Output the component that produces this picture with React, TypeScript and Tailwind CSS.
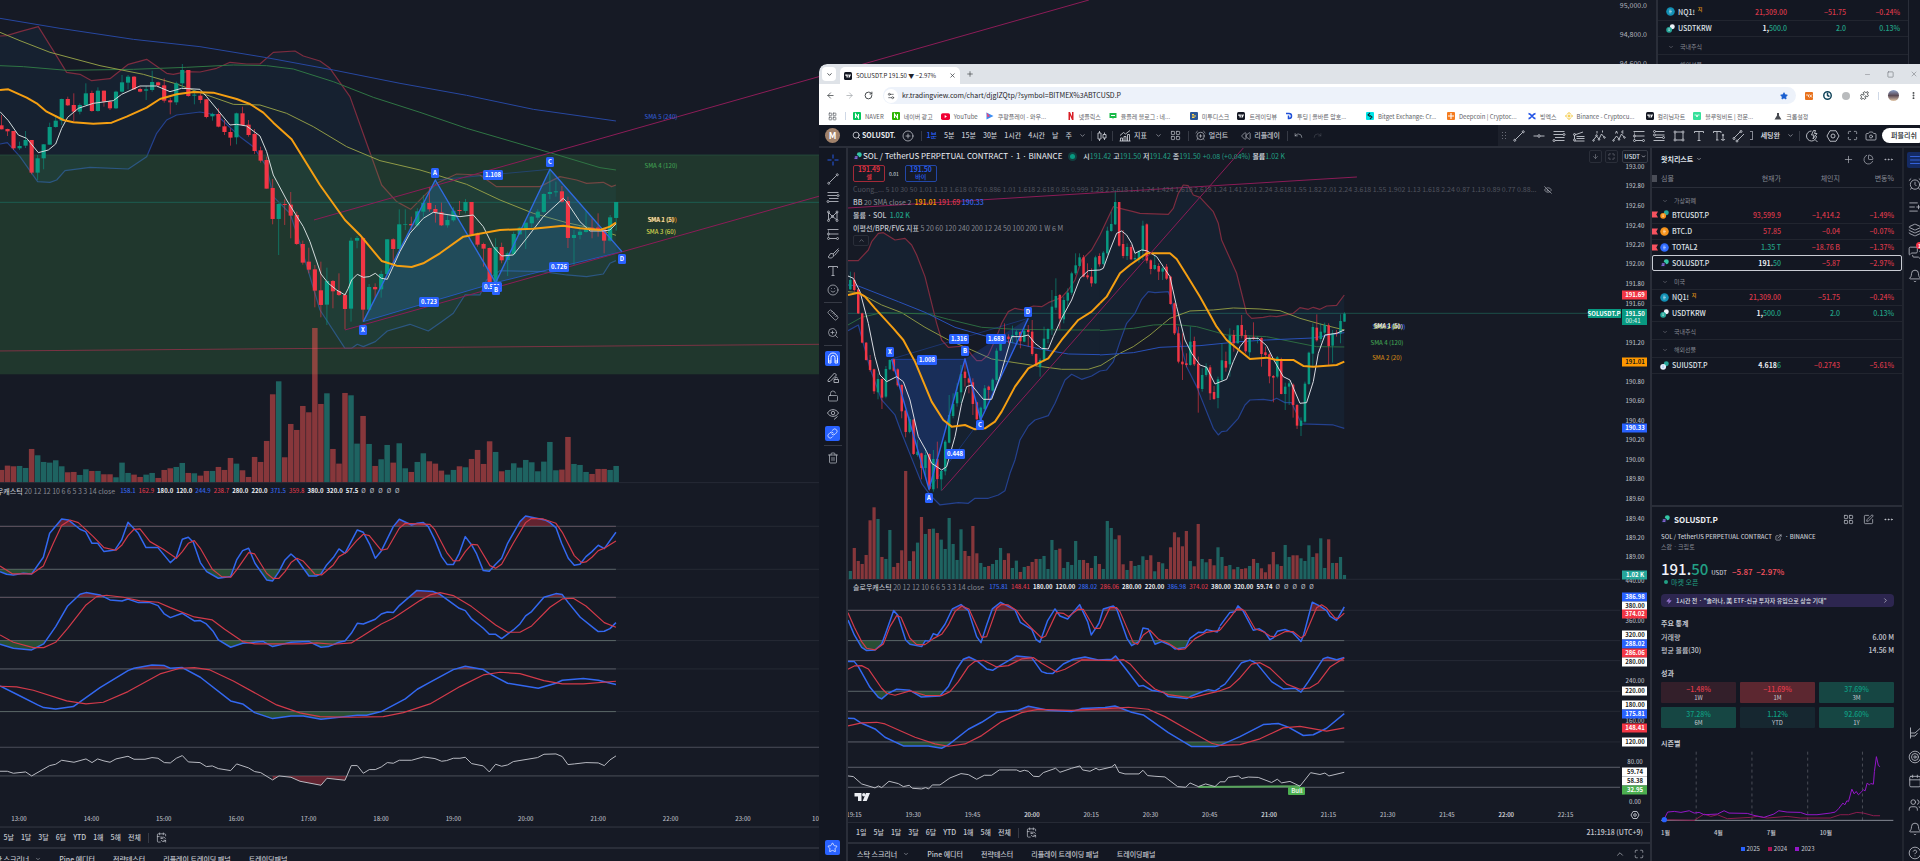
import type { ReactNode } from 'react';
import {
  AlarmClock, AlarmClockPlus, ArrowDown, ArrowLeft, ArrowRight, Bell, Calendar, CalendarSync, Camera,
  ChevronDown, ChevronRight, ChevronUp, CircleHelp, CirclePlus, Clock, Ellipsis, EllipsisVertical,
  ExternalLink, Eye, EyeOff, Layers, LayoutGrid, Link, ListPlus, LockOpen, Maximize, MessagesSquare, Minus,
  PieChart, Plus, Puzzle, Redo, Rewind, RotateCw, Ruler, Search, Settings2, Smile, Square,
  SquarePen, Star, Target, TextAlignJustify, Trash2, Type, Undo, Users, X, Zap, ZoomIn,
} from 'lucide-react';

/* ---------- chart data ---------- */

// each bar: G/R, high, body top, body bottom, low, volume top (drawing units, 3 per pixel)
const BACK_BARS = `R345,376,388,388,1410 R386,387,394,408,1397 R393,393,445,450,1399 G425,438,445,450,1398 G393,420,437,444,1404
R420,420,518,523,1347 G465,475,518,540,1366 G432,433,475,508,1386 G368,381,434,434,1388 G345,362,381,383,1381
G296,297,362,375,1399 R290,297,316,318,1417 R280,315,335,365,1416 G310,315,335,343,1425 G250,280,315,315,1408
R272,279,333,335,1413 G262,272,333,335,1413 R272,272,305,320,1423 R300,305,325,330,1423 G272,275,325,327,1432
G225,247,275,278,1388 G225,230,248,268,1419 R228,230,268,270,1424 R262,267,275,277,1431 G258,268,272,300,1424
G212,246,270,275,1419 R245,247,256,262,1434 R235,256,302,308,1410 R293,301,307,343,1405 G245,250,307,315,1401
G192,210,250,265,1389 R210,210,288,290,1419 G270,284,287,313,1420 R280,287,300,310,1427 R297,298,351,355,1413
G338,342,349,362,1413 R325,342,380,382,1401 R360,379,396,405,1410 R385,396,413,437,1374 G338,340,412,433,1391
R320,340,375,378,1411 R360,374,405,410,1431 R387,402,453,462,1371 R440,451,482,488,1386 R470,480,566,566,1323
R537,564,657,673,1183 G610,612,657,765,1144 R598,612,615,675,1372 R576,614,647,715,1272 R635,645,732,735,1290
R722,732,788,794,1218 R743,785,809,820,1237 R795,808,872,922,984 R785,871,915,952,1212 G803,843,914,975,1180
R840,843,874,925,1347 R820,873,885,888,1391 R880,885,927,988,1179 G713,722,926,965,1186 G708,714,722,745,1331
R712,714,929,965,1248 G852,861,929,930,1332 R850,861,868,895,1398 G812,822,868,893,1378 G717,718,822,825,1335
R715,718,747,800,1388 G628,673,747,747,1330 G628,672,674,690,1405 R650,672,676,690,1416 G625,634,676,680,1386
G585,609,635,650,1360 R562,609,628,635,1384 R615,627,638,668,1391 R608,637,676,678,1412 G645,660,676,683,1424
G622,632,661,665,1410 R603,630,633,645,1399 G597,606,633,640,1402 R606,606,704,706,1377 R698,701,734,740,1350
R728,732,746,800,1392 R743,744,850,850,1324 G715,741,850,855,1356 R728,741,781,790,1414 G755,760,780,828,1410
G695,702,762,765,1390 G680,683,703,705,1403 G668,668,685,747,1380 G648,650,670,683,1387 G628,635,653,660,1414
G580,582,636,640,1385 G510,576,582,598,1326 G545,574,577,590,1411 R558,574,605,608,1409 R590,603,714,744,1311
G690,705,714,795,1392 G678,695,705,718,1395 G632,685,696,698,1416 R655,683,688,715,1422 R640,683,690,710,1407
R685,688,722,760,1407 G645,652,722,725,1410 G606,606,654,692,1398`;

const FRONT_BARS_A = `G95,120,148,150,993 R97,120,150,155,924 R148,148,220,222,963 R218,220,308,310,972 R306,308,360,362,945
R345,360,390,395,841 R386,388,454,462,802 G400,417,457,478,837 R415,417,473,507,951 G378,387,470,475,957
G358,360,388,390,870 R356,358,392,395,981 R385,388,436,440,969 R433,435,514,535,931 R510,512,576,592,693
G530,537,576,580,963 R537,539,642,645,934 G600,635,645,650,908 R638,640,684,718,831 G625,645,684,710,882
R640,642,747,752,867 G630,657,748,755,866 R605,657,717,745,879 G690,693,718,752,899 G600,605,694,706,927
G465,525,608,610,834 G460,492,528,535,912 G430,456,490,500,960 G375,402,457,490,868 R355,395,414,440,933
R412,415,428,460,948 R415,427,492,525,858 R485,487,538,540,940 G500,503,540,550,969 G435,445,507,510,981
R437,440,450,480,978 G415,419,452,455,972 G325,332,420,425,960 G285,300,332,333,924 R250,290,305,310,960
R283,290,297,310,940 G257,285,290,310,984 G270,275,285,310,962 R274,276,304,325,996 G265,272,305,307,981
R255,270,276,320,978 R240,275,342,347,966 R340,342,375,380,957 G355,360,382,410,957 G260,296,360,365,948
G265,267,297,310,987 G150,200,267,285,900 G115,168,203,210,930 R162,165,236,267,926 G170,180,238,250,984
G145,158,182,200,966 G95,100,158,165,975 G40,76,100,105,903 G40,52,78,80,960 R45,52,110,112,960
R70,106,112,118,969 R85,110,130,140,984 G47,52,130,132,948 R40,48,73,80,972 G33,38,72,75,987`;

const FRONT_BARS_B = `G140,152,220,225,1023 G95,132,153,155,1044 G30,66,133,135,1078 R66,66,197,200,1066 R150,192,228,235,1153
G190,201,228,240,1170 R195,201,238,240,1143 G220,234,238,245,1158 G210,214,238,248,1155 G122,137,212,240,1129
R130,133,242,250,1140 R238,241,267,283,1126 G225,255,267,270,1174 R250,258,275,300,1146 G260,265,275,300,1150
R252,260,296,300,1167 R287,290,372,374,1102 R368,370,460,465,1057 R440,460,545,550,1072 R460,545,553,600,1099
R520,550,555,562,1053 G440,485,555,557,1143 R470,483,553,558,1159 R530,551,625,698,1032 G565,585,627,635,1137
G550,560,585,590,1147 R555,562,640,660,1137 R618,636,657,660,1156 G590,598,654,685,1102 G490,541,600,605,1131
R515,543,563,575,1158 G445,467,553,590,1155 R450,465,490,515,1168 G435,436,490,490,1161 R405,435,467,475,1167
R450,465,514,520,1165 G470,475,517,530,1158 R427,472,476,480,1137 G470,474,477,490,1149 R472,474,522,560,1165
R500,517,525,530,1177 R520,523,589,610,1153 R585,588,593,667,1116 G528,532,590,595,1153 R533,537,642,643,1158
G608,620,642,690,1095 G603,610,620,675,1131 R610,614,675,713,1126 R672,675,737,747,1126 G712,722,738,768,1135
G605,611,725,728,1143 G515,518,612,615,1096 G430,441,521,560,1131 R403,443,481,485,1120 G430,455,477,487,1075
G428,435,458,475,1164 R430,436,498,555,1078 G450,460,497,548,1149 R450,458,461,470,1149 G403,423,460,490,1131
G397,401,425,425,1185`;

const BACK_UPPER = '0,108 20,107 60,95 115,80 165,160 200,217 240,223 275,242 330,236 385,193 440,178 500,220 520,223 560,215 600,216 650,205 690,187 740,192 780,192 820,157 885,153 910,168 960,183 990,205 1050,290 1100,430 1145,555 1190,605 1232,628 1270,590 1310,550 1370,522 1440,525 1490,560 1620,560 1680,530 1730,540 1760,550 1810,547 1835,560 1848,555';
const BACK_LOWER = '0,432 22,428 60,470 113,545 150,547 170,540 195,512 270,502 385,507 440,470 470,400 500,360 530,345 600,336 650,345 720,410 760,440 800,500 820,590 870,640 900,730 960,930 1035,1045 1055,1045 1072,1033 1090,1040 1126,1025 1162,993 1230,973 1285,993 1325,965 1360,940 1395,885 1440,885 1460,840 1500,812 1630,815 1700,825 1760,830 1810,822 1830,790 1848,782';
const A_UPPER = '99,62 130,62 160,30 170,5 190,-20 205,-22 240,0 270,-5 290,15 305,45 330,110 350,190 365,250 380,300 400,322 450,318 470,345 485,362 500,362 520,345 545,290 560,250 580,215 600,205 625,210 655,198 680,200 700,188 740,172 760,150 780,120 800,60 830,30 855,-15';
const A_LOWER = '99,272 130,255 145,310 165,385 200,480 240,525 260,580 300,680 320,730 345,765 375,795 430,788 460,790 480,775 520,775 550,765 570,752 585,700 600,660 615,600 640,558 660,540 700,527 720,490 750,420 770,403 800,418 830,408 855,393';
const B_UPPER = '0,165 40,80 60,85 100,95 120,100 205,103 220,85 235,40 250,15 265,17 280,45 300,52 340,95 355,130 365,180 410,280 430,360 440,400 455,415 490,412 510,408 530,410 580,400 600,383 625,388 640,382 660,388 680,378 710,376 733,345';
const B_LOWER = '0,573 20,570 40,545 60,485 80,430 105,400 125,358 145,335 165,338 205,335 215,365 225,430 260,560 290,620 340,745 355,765 365,755 380,753 415,715 435,675 450,660 490,658 515,662 530,655 555,668 575,668 590,700 605,732 700,735 733,745';

interface OscRow {
  hi: number;
  lo: number;
  fast: string;
  slow: string;
}

const BACK_OSC: OscRow[] = [
  {
    hi: 139, lo: 268,
    fast: '0,275 20,283 40,285 70,280 95,282 130,232 149,160 185,117 205,120 240,148 257,155 276,190 293,190 312,215 345,210 365,180 384,127 415,160 438,203 474,203 511,248 529,232 547,178 565,172 580,187 601,248 620,275 655,295 692,290 710,240 728,212 746,205 765,250 800,300 818,303 837,275 855,240 873,222 890,237 927,288 950,288 963,282 980,255 1000,233 1017,207 1035,220 1072,150 1090,157 1110,195 1126,235 1144,213 1180,140 1198,118 1235,135 1252,130 1270,128 1285,140 1305,180 1325,230 1342,254 1360,254 1378,220 1396,170 1415,195 1430,222 1450,272 1468,274 1487,253 1505,235 1523,190 1560,125 1577,108 1635,120 1650,128 1668,143 1685,190 1705,235 1723,256 1740,253 1758,230 1776,215 1795,196 1813,206 1848,157',
    slow: '0,258 38,282 95,282 130,258 160,190 185,137 210,120 235,128 280,170 312,203 348,211 366,195 384,167 402,148 420,147 450,185 490,208 529,235 547,215 565,190 583,182 601,205 637,268 665,290 692,292 710,270 746,218 764,222 800,280 818,295 837,295 855,275 873,248 891,235 909,243 945,283 965,285 1000,255 1017,230 1040,217 1072,180 1090,163 1108,167 1144,211 1162,207 1198,145 1216,130 1290,133 1305,150 1340,217 1360,243 1378,242 1396,215 1415,193 1433,195 1470,257 1487,265 1505,253 1540,190 1577,128 1595,115 1630,117 1668,130 1687,157 1723,227 1745,248 1758,246 1776,232 1795,212 1813,205 1848,183',
  },
  {
    hi: 352, lo: 482,
    fast: '0,493 40,505 95,510 131,492 167,440 203,378 240,343 258,338 300,345 330,360 366,363 384,357 415,368 450,368 474,377 493,402 511,413 547,400 583,423 601,422 619,432 640,455 655,480 692,502 728,490 790,485 818,500 873,487 927,485 963,502 985,500 1017,487 1035,483 1054,460 1072,430 1090,432 1126,418 1144,402 1162,396 1180,398 1198,377 1250,332 1300,335 1320,343 1378,385 1396,392 1415,417 1450,445 1468,463 1487,463 1505,476 1540,450 1560,432 1577,408 1595,395 1632,352 1668,341 1687,344 1705,368 1741,412 1776,440 1795,455 1813,454 1830,446 1848,428',
    slow: '0,465 40,487 100,503 131,503 167,487 203,445 258,375 290,350 320,346 370,352 420,363 474,367 511,383 583,411 637,420 674,448 728,485 764,492 909,492 950,489 1000,493 1054,489 1090,467 1144,432 1180,415 1260,362 1290,345 1320,338 1360,347 1415,380 1487,435 1523,457 1560,457 1595,438 1650,382 1687,357 1720,355 1758,378 1813,428 1848,442',
  },
  {
    hi: 567, lo: 695,
    fast: '0,618 50,643 113,675 131,683 167,687 220,680 300,623 384,572 402,565 456,555 493,557 511,565 547,563 601,592 692,663 728,672 764,698 818,716 873,708 910,708 963,718 1072,706 1100,706 1144,695 1216,657 1252,628 1288,608 1360,569 1396,559 1450,569 1475,585 1523,610 1615,625 1668,610 1687,601 1750,596 1795,601 1848,614',
    slow: '0,619 50,621 100,631 200,663 258,672 310,667 384,635 480,582 540,565 583,563 630,570 700,603 830,675 900,699 960,710 1050,712 1150,710 1210,698 1290,672 1380,620 1450,585 1500,577 1560,581 1632,602 1687,612 1750,612 1848,604',
  },
];
const BACK_RSI = '0,874 22,874 40,880 77,876 95,888 149,857 167,853 185,841 222,847 258,837 276,848 293,837 312,843 330,847 348,837 384,829 402,838 435,838 456,833 474,835 493,848 511,849 529,835 547,827 565,846 600,848 619,860 637,858 655,866 692,872 710,852 746,864 764,875 782,878 818,900 837,888 873,892 900,904 963,916 981,895 1035,901 1054,857 1072,857 1090,880 1108,869 1126,869 1144,861 1162,848 1180,850 1198,841 1235,841 1270,831 1305,836 1325,844 1340,842 1360,835 1380,835 1396,832 1415,851 1450,858 1468,876 1487,853 1505,859 1523,855 1540,845 1613,833 1632,823 1668,822 1687,830 1704,854 1723,852 1758,848 1795,849 1813,857 1830,840 1848,828';

const FRONT_OSC_A: OscRow[] = [
  {
    hi: 121, lo: 212,
    fast: '99,150 118,195 140,232 155,242 180,240 200,222 212,190 236,122 248,135 272,210 285,223 320,230 331,212 343,214 355,191 367,196 390,163 412,117 438,104 460,122 485,200 498,218 515,165 532,117 557,97 600,120 616,157 650,178 663,208 675,217 698,152 720,117 735,138 758,147 794,104 818,155 829,195 852,160 865,117 895,108 905,117 936,205 950,227 972,215 984,174 1000,177 1020,223 1040,215 1065,225 1080,237 1112,233 1125,205 1150,187 1165,188 1175,179 1207,186 1215,170',
    slow: '99,128 118,172 140,215 155,235 180,240 205,222 225,170 245,137 258,142 285,205 305,224 330,224 355,206 380,193 400,165 420,125 440,108 462,117 500,202 515,200 545,115 560,103 580,105 605,122 625,150 655,180 680,204 692,198 725,128 745,130 760,140 790,118 805,118 838,175 855,175 885,113 905,113 915,125 955,218 968,223 985,195 1005,181 1030,207 1060,220 1090,239 1110,237 1140,206 1175,187 1215,181',
  },
  {
    hi: 272, lo: 364,
    fast: '99,275 118,275 130,290 165,352 190,382 200,387 220,370 245,358 285,361 318,381 375,378 400,350 425,298 445,268 462,261 485,272 515,297 533,301 550,290 605,258 650,263 680,305 695,310 713,311 745,282 775,268 810,261 850,270 890,268 902,258 935,300 972,349 985,347 1010,361 1045,367 1060,380 1115,386 1130,378 1160,366 1180,359 1200,363 1215,354',
    slow: '99,298 118,288 140,287 160,297 200,355 215,370 240,376 285,363 330,376 380,377 405,365 430,335 460,290 480,274 505,271 545,291 580,287 620,267 655,263 680,280 725,306 750,298 800,270 900,272 925,269 945,282 985,327 1020,357 1060,374 1130,384 1180,371 1215,363',
  },
  {
    hi: 424, lo: 516,
    fast: '99,445 118,446 140,460 180,477 210,502 265,528 340,528 380,535 400,525 460,478 500,457 545,428 610,421 640,409 700,421 770,425 800,416 870,413 900,408 950,427 985,435 1060,488 1130,530 1200,530 1215,526',
    slow: '99,468 140,459 185,457 210,462 300,502 360,522 400,529 450,522 500,497 560,455 620,428 670,418 770,421 860,417 940,412 1000,418 1050,440 1120,480 1190,520 1215,526',
  },
];
const FRONT_OSC_B: OscRow[] = [
  {
    hi: 881, lo: 963,
    fast: '0,922 30,885 45,883 54,867 70,882 100,934 118,930 135,940 150,960 160,955 172,937 195,932 218,940 243,965 250,950 277,857 300,868 320,880 330,895 350,907 373,870',
    slow: '0,934 30,900 50,876 65,876 75,882 105,930 130,938 150,950 165,952 195,938 220,938 243,955 255,948 290,872 305,864 320,873 345,900 355,902 373,887',
  },
  {
    hi: 1020, lo: 1103,
    fast: '0,1090 15,1082 65,1023 90,1016 110,1025 155,1075 190,1095 225,1093 243,1104 265,1075 310,1012 323,1008 350,1015 373,1009',
    slow: '0,1100 30,1090 60,1065 95,1027 120,1023 150,1038 200,1082 240,1096 270,1092 295,1078 330,1035 373,1010',
  },
  {
    hi: 1157, lo: 1241,
    fast: '0,1250 60,1226 130,1193 175,1190 205,1200 250,1223 280,1221 320,1203 373,1163',
    slow: '0,1250 60,1248 120,1232 190,1202 240,1198 320,1211 373,1202',
  },
];
const FRONT_RSI_A = '99,618 115,620 140,642 180,654 190,648 200,653 222,634 250,641 265,650 283,646 292,655 320,657 332,653 341,657 352,645 375,645 405,624 438,611 460,614 485,628 508,616 530,616 553,600 605,600 615,605 628,601 640,604 655,619 672,620 685,608 722,595 735,607 770,595 795,588 803,600 825,604 843,595 852,600 890,591 900,583 912,607 930,612 972,612 984,601 998,617 1020,619 1050,621 1088,650 1112,652 1125,639 1150,650 1172,642 1200,650 1215,636';
const FRONT_RSI_B = '0,1350 15,1350 25,1338 55,1334 65,1341 85,1337 115,1338 155,1352 172,1343 185,1353 210,1349 240,1362 272,1325 300,1330 315,1326 327,1334 373,1324';

/* ---------- chart parts ---------- */

function Line({ d, color, w = 1, opacity = 1 }: { d: string; color: string; w?: number; opacity?: number }) {
  return <polyline points={d} fill="none" stroke={color} strokeWidth={w} opacity={opacity} strokeLinejoin="round" vectorEffect="non-scaling-stroke" />;
}

function Band({ upper, lower }: { upper: string; lower: string }) {
  const back = lower.split(' ').reverse().join(' ');
  return (
    <>
      <polygon points={`${upper} ${back}`} fill="#2196f3" opacity="0.06" />
      <Line d={upper} color="#7d2c3f" w={1.2} />
      <Line d={lower} color="#24418f" w={1.2} />
    </>
  );
}

function Bars({ data, x0, step, base, body, vol }: { data: string; x0: number; step: number; base: number; body: number; vol: number }) {
  return (
    <>
      {data.split(/\s+/).map((s, i) => {
        const [high, top, bottom, low, v] = s.slice(1).split(',').map(Number);
        const up = s[0] === 'G';
        const x = x0 + step * i;
        return (
          <g key={i} fill={up ? '#089981' : '#f23645'}>
            <rect x={x - vol / 2} y={v} width={vol} height={base - v} fill={up ? '#26a69a' : '#ef5350'} opacity="0.52" />
            <rect x={x - 1.3} y={high} width={2.6} height={low - high} opacity="0.7" />
            <rect x={x - body / 2} y={top} width={body} height={bottom - top} />
          </g>
        );
      })}
    </>
  );
}

function Oscillator({ id, row, from, to, levels = true }: { id: string; row: OscRow; from: number; to: number; levels?: boolean }) {
  return (
    <g>
      <clipPath id={`${id}-hi`}><rect x={from} y={row.hi - 60} width={to - from} height={60} /></clipPath>
      <clipPath id={`${id}-lo`}><rect x={from} y={row.lo} width={to - from} height={60} /></clipPath>
      {levels && <Line d={`${from},${row.hi} ${to},${row.hi}`} color="#5d606b" />}
      {levels && <Line d={`${from},${row.lo} ${to},${row.lo}`} color="#5d606b" />}
      <polygon points={`${row.fast} ${to},${row.hi} ${from},${row.hi}`} fill="#f23645" opacity="0.35" clipPath={`url(#${id}-hi)`} />
      <polygon points={`${row.fast} ${to},${row.lo} ${from},${row.lo}`} fill="#4caf50" opacity="0.35" clipPath={`url(#${id}-lo)`} />
      <Line d={row.fast} color="#3368f0" w={1.5} />
      <Line d={row.slow} color="#d23a4a" w={1.2} />
    </g>
  );
}

function Tag({ x, y, children }: { x: number; y: number; children: string }) {
  const w = children.length > 1 ? 20 : 8;
  return (
    <g>
      <rect x={x - w / 2} y={y - 5} width={w} height={10} rx="1.5" fill="#2962ff" />
      <text x={x} y={y + 2} textAnchor="middle" fill="#fff" className="text-[6px] font-bold">{children}</text>
    </g>
  );
}

function Label({ x, y, color = '#b2b5be', children }: { x: number; y: number; color?: string; children: string }) {
  return <text x={x} y={y + 2} textAnchor="middle" fill={color} className="text-[6px] font-medium">{children}</text>;
}

function BackChart() {
  return (
    <svg className="absolute inset-0 h-full w-full" aria-label="BTCUSD.P">
      <g transform="scale(0.3333)">
        <Band upper={BACK_UPPER} lower={BACK_LOWER} />
        <rect x="0" y="465" width="6000" height="658" fill="#4caf50" opacity="0.2" />
        <Line d="0,465 6000,465" color="#2a5a45" opacity={0.6} />
        <Line d="0,607 6000,607" color="#1c5c50" />
        <Line d="0,1053 2460,1033" color="#7b3344" />
        <Line d="0,55 180,85 400,118 600,140 800,173 1000,210 1200,250 1400,286 1600,328 1848,363" color="#2747a0" />
        <Line d="0,197 70,200 200,211 400,208 560,202 700,195 800,197 880,207 1000,245 1120,292 1260,337 1400,385 1650,458 1740,485 1800,503 1848,510" color="#2f7544" />
        <Line d="0,97 60,122 150,157 300,197 430,223 530,252 600,278 700,313 780,315 860,340 940,380 1040,440 1140,482 1260,510 1300,522 1400,553 1500,600 1600,640 1700,668 1800,690 1848,706" color="#8f9a46" />
        <polygon points="1090,965 1306,540 1487,848" fill="#2479c8" opacity="0.25" />
        <polygon points="1487,848 1650,508 1866,755" fill="#2479c8" opacity="0.25" />
        <Line d="1306,540 1650,508" color="#2962ff" opacity={0.3} />
        <Line d="1090,965 1487,848" color="#2962ff" opacity={0.6} />
        <Line d="1487,848 1866,755" color="#2962ff" opacity={0.6} />
        <Line d="942,660 3267,0" color="#8c1c57" />
        <Line d="1035,990 2460,588" color="#8c1c57" />
        <Bars data={BACK_BARS} x0={4.5} step={18.08} base={1448} body={12.5} vol={16.5} />
        <Line d="1090,965 1306,540 1487,848 1650,508 1866,755" color="#2f6be0" w={1.4} />
        <Line d="0,335 25,362 55,405 80,415 115,458 145,450 167,432 185,385 203,352 235,325 280,310 340,302 365,283 420,258 470,258 510,275 545,265 600,268 620,290 690,375 710,373 740,378 780,408 800,455 820,525 860,600 910,680 930,725 963,822 985,850 1010,870 1035,885 1045,865 1055,840 1072,823 1090,832 1108,830 1126,820 1144,835 1162,838 1200,755 1230,700 1270,655 1300,637 1380,650 1420,645 1450,680 1480,740 1505,768 1540,765 1580,715 1630,650 1690,595 1700,605 1740,665 1770,693 1810,693 1830,690 1848,672" color="#d3dcdc" />
        <Line d="0,270 25,268 80,293 110,310 140,335 190,360 220,367 280,371 335,368 380,350 440,323 480,297 530,283 580,276 640,278 710,297 750,312 790,338 820,368 875,418 960,555 1035,660 1080,705 1145,783 1190,797 1235,801 1270,790 1320,760 1390,710 1430,703 1500,690 1600,686 1690,677 1740,685 1800,690 1830,680 1848,668" color="#f59f12" w={2} />
        <g transform="translate(0 1440)">
          <Line d="0,8 6000,8" color="#262a35" />
          <Line d="0,1040 6000,1040" color="#262a35" />
          {BACK_OSC.map((row, i) => (
            <g key={i}>
              <Line d={`1848,${row.hi} 2460,${row.hi}`} color="#262a35" />
              <Line d={`1848,${row.lo} 2460,${row.lo}`} color="#262a35" />
              <Oscillator id={`back-${i}`} row={row} from={0} to={1848} />
            </g>
          ))}
          <Line d="0,802 2460,802" color="#4b4e59" />
          <Line d="0,888 2460,888" color="#4b4e59" />
          <polygon points="818,888 818,900 837,888" fill="#f23645" opacity="0.4" />
          <polygon points="855,888 873,892 900,904 963,916 981,895 1035,901 1042,888" fill="#f23645" opacity="0.35" />
          <Line d={BACK_RSI} color="#b8bac2" />
        </g>
      </g>
      <Label x={661} y={117} color="#2f57c8">SMA 5 (240)</Label>
      <Label x={661} y={166} color="#3f9a50">SMA 4 (120)</Label>
      <Label x={662} y={220} color="#f59f12">SMA 2 (20)</Label>
      <Label x={661} y={220} color="#e8e6cf">SMA 1 (5)</Label>
      <Label x={661} y={232} color="#d6d64e">SMA 3 (60)</Label>
      <Tag x={492} y={287}>0.581</Tag>
      <Tag x={363} y={330}>X</Tag>
      <Tag x={435} y={173}>A</Tag>
      <Tag x={496} y={290}>B</Tag>
      <Tag x={550} y={162}>C</Tag>
      <Tag x={622} y={259}>D</Tag>
      <Tag x={429} y={302}>0.723</Tag>
      <Tag x={493} y={175}>1.108</Tag>
      <Tag x={559} y={267}>0.726</Tag>
      {['13:00', '14:00', '15:00', '16:00', '17:00', '18:00', '19:00', '20:00', '21:00', '22:00', '23:00', '10'].map((t, i) => (
        <Label key={t} x={19 + i * 72.4} y={819}>{t}</Label>
      ))}
    </svg>
  );
}

function FrontChart() {
  return (
    <svg className="absolute inset-0 h-full w-full" aria-label="SOLUSDT.P">
      <g transform="scale(0.3333)">
        <Line d="0,496 6000,496" color="#1b4f49" />
        <Line d="0,1294 6000,1294" color="#262a35" />
        <g transform="translate(-99 276)">
          <Band upper={A_UPPER} lower={A_LOWER} />
          <Line d="99,155 130,158 200,195 260,218 330,262 400,300 470,330 530,357 600,368 680,380 740,388 820,388 855,377" color="#8a9442" />
          <Line d="99,255 140,232 200,218 340,222 400,238 500,262 600,268 760,270 855,270" color="#2c6b41" />
          <Line d="99,135 130,138 250,185 330,217 420,262 500,285 600,310 680,328 760,342 855,344" color="#2850b8" />
          <polygon points="230,357 342,748 450,357" fill="#2962ff" opacity="0.2" />
          <polygon points="450,357 497,540 640,235" fill="#2962ff" opacity="0.2" />
          <Line d="230,358 450,358" color="#2962ff" opacity={0.4} />
          <Line d="230,357 640,235" color="#2962ff" opacity={0.3} />
          <Line d="342,748 497,540" color="#2962ff" opacity={0.3} />
          <Bars data={FRONT_BARS_A} x0={106} step={11.86} base={1017} body={7.5} vol={9.6} />
          <Line d="230,357 342,748 450,357 497,540 640,235" color="#2f62e8" w={1.4} />
          <Line d="99,108 115,115 135,155 160,250 180,350 195,405 215,425 245,410 265,425 285,480 310,590 335,635 350,670 380,690 395,680 420,590 440,490 455,440 470,435 490,460 505,478 530,478 555,410 590,290 620,290 640,285 660,310 680,325 700,327 715,290 740,235 770,180 795,115 820,92 855,90" color="#d9dbe2" />
          <Line d="99,165 130,158 150,170 180,205 235,265 265,300 300,365 350,485 385,540 410,560 450,555 480,568 510,565 540,545 560,515 600,440 640,385 680,365 700,355 740,300 790,240 830,215 855,190" color="#f59f12" w={2} />
        </g>
        <g transform="translate(756 96)">
          <Band upper={B_UPPER} lower={B_LOWER} />
          <Line d="0,558 60,520 100,500 150,465 210,415 270,393 340,390 400,384 480,387 540,392 600,415 660,432 733,450" color="#8a9442" />
          <Line d="0,452 100,445 160,435 220,433 290,440 380,465 500,470 600,490 650,500 733,501" color="#2c6b41" />
          <Line d="0,525 100,518 180,502 300,497 420,485 500,480 640,474 700,463 733,458" color="#2850b8" />
          <Bars data={FRONT_BARS_B} x0={22} step={11.86} base={1197} body={7.5} vol={9.6} />
          <Line d="0,270 10,265 30,210 50,160 65,153 80,165 95,190 105,220 125,210 140,212 170,230 190,260 210,290 230,380 255,480 275,520 300,555 320,562 345,612 380,598 400,545 420,500 440,475 475,475 500,497 520,537 550,590 570,600 600,670 620,668 640,605 655,520 675,465 710,460 733,450" color="#d9dbe2" />
          <Line d="0,370 20,350 60,280 90,255 140,220 210,220 230,237 260,285 300,350 350,440 380,480 450,537 500,533 530,540 580,540 610,558 640,560 680,557 710,555 733,545" color="#f59f12" w={2} />
        </g>
        <Line d="281,1028 1186,0" color="#8c1c57" />
        <Line d="0,180 1527,87" color="#8c1c57" />
        <g transform="translate(-99 1266)">
          {FRONT_OSC_A.map((row, i) => (
            <g key={i}>
              <Line d={`1588,${row.hi} 6000,${row.hi}`} color="#262a35" />
              <Line d={`1588,${row.lo} 6000,${row.lo}`} color="#262a35" />
              <Line d={`99,${row.hi} 1588,${row.hi}`} color="#5d606b" />
              <Line d={`99,${row.lo} 1588,${row.lo}`} color="#5d606b" />
              <Oscillator id={`front-a${i}`} row={row} from={99} to={1215} levels={false} />
            </g>
          ))}
          <Line d="99,592 6000,592" color="#5d606b" />
          <Line d="99,652 6000,652" color="#5d606b" />
          <Line d="1150,651 1455,649" color="#58a55c" w={2} />
          <Line d={FRONT_RSI_A} color="#b8bac2" />
        </g>
        <g transform="translate(1116 426) scale(1 1.093)">
          {FRONT_OSC_B.map((row, i) => (
            <Oscillator key={i} id={`front-b${i}`} row={row} from={0} to={373} levels={false} />
          ))}
          <Line d={FRONT_RSI_B} color="#b8bac2" />
        </g>
      </g>
      <g>
        <rect x="440" y="639" width="17" height="8" rx="1" fill="#4caf50" />
        <Label x={449} y={643} color="#fff">Bull</Label>
      </g>
      <Label x={541} y={179} color="#3467f5">SMA 5 (240)</Label>
      <Label x={540} y={179} color="#d6d64e">SMA 3 (60)</Label>
      <Label x={539} y={178} color="#f1f1e4">SMA 1 (5)</Label>
      <Label x={539} y={195} color="#3f9a50">SMA 4 (120)</Label>
      <Label x={539} y={210} color="#c78117">SMA 2 (20)</Label>
      <Tag x={42} y={204}>X</Tag>
      <Tag x={81} y={350}>A</Tag>
      <Tag x={117} y={203}>B</Tag>
      <Tag x={132} y={277}>C</Tag>
      <Tag x={180} y={164}>D</Tag>
      <Tag x={79} y={212}>1.008</Tag>
      <Tag x={111} y={191}>1.316</Tag>
      <Tag x={148} y={191}>1.683</Tag>
      <Tag x={107} y={306}>0.448</Tag>
      {['19:15', '19:30', '19:45', '20:00', '20:15', '20:30', '20:45', '21:00', '21:15', '21:30', '21:45', '22:00', '22:15'].map((t, i) => (
        <Label key={t} x={6 + i * 59.3} y={667} color={t.endsWith(':00') ? '#e0e2e8' : '#b2b5be'}>{t}</Label>
      ))}
      {/* TradingView mark */}
      <path d="M6.500 645h7v8h-3.500v-4.500H6.500zM18 645h4l-3.300 8h-4z" fill="#eceef3" />
      <circle cx="15.800" cy="646.800" r="1.700" fill="#eceef3" />
    </svg>
  );
}

const TICKS: [number, string][] = [
  [19, '193.00'], [38, '192.80'], [58, '192.60'], [78, '192.40'], [97, '192.20'], [116, '192.00'], [136, '191.80'],
  [156, '191.60'], [195, '191.20'], [234, '190.80'], [253, '190.60'], [273, '190.40'], [292, '190.20'],
  [312, '190.00'], [331, '189.80'], [351, '189.60'], [371, '189.40'], [390, '189.20'], [409, '189.00'],
  [433, '440.00'], [473, '360.00'], [533, '240.00'], [573, '160.00'], [614, '80.00'], [654, '0.00'],
];
const PRICE_TAGS: [number, string, string, string][] = [
  [147, '191.69', '#f23645', '#fff'], [214, '191.01', '#ff9800', '#1b1b1b'], [280, '190.33', '#2962ff', '#fff'],
  [427, '1.02 K', '#26a69a', '#fff'], [449, '386.98', '#2962ff', '#fff'], [458, '380.00', '#fff', '#222'],
  [466, '374.02', '#f23645', '#fff'], [487, '320.00', '#fff', '#222'], [496, '288.02', '#2962ff', '#fff'],
  [505, '286.06', '#f23645', '#fff'], [514, '280.00', '#fff', '#222'], [543, '220.00', '#fff', '#222'],
  [557, '180.00', '#fff', '#222'], [566, '175.81', '#2962ff', '#fff'], [580, '148.41', '#f23645', '#fff'],
  [594, '120.00', '#fff', '#222'], [624, '59.74', '#fff', '#222'], [633, '58.38', '#fff', '#222'],
  [642, '32.95', '#4caf50', '#fff'],
];

function PriceAxis() {
  return (
    <svg className="relative h-full w-[30px] shrink-0 overflow-visible" aria-label="price">
      {TICKS.map(([y, t]) => <Label key={t} x={15} y={y}>{t}</Label>)}
      {PRICE_TAGS.map(([y, t, bg, fg]) => (
        <g key={t}>
          <rect x="2" y={y - 4.5} width="25" height="9" fill={bg} />
          <text x="15" y={y + 2} textAnchor="middle" fill={fg} className="text-[6px] font-bold">{t}</text>
        </g>
      ))}
      <rect x="2" y="161" width="25" height="16" fill="#089981" />
      <rect x="-32" y="161" width="33" height="9" fill="#089981" />
      <text x="15" y="168" textAnchor="middle" fill="#fff" className="text-[6px] font-bold">191.50</text>
      <text x="13" y="175" textAnchor="middle" fill="#e3f5f1" className="text-[6px]">00:41</text>
      <text x="-16" y="168" textAnchor="middle" fill="#fff" className="text-[6px] font-bold">SOLUSDT.P</text>
      <g stroke="#b2b5be" fill="none"><path d="M11 667l2-3.500h4l2 3.500-2 3.500h-4z" /><circle cx="15" cy="667" r="1.300" /></g>
    </svg>
  );
}

/* ---------- shared widgets ---------- */

const OSC_VALUES_BACK: [string, string][] = [
  ['158.1', 'text-[#3565e8]'], ['162.9', 'text-[#d63849]'], ['180.0', ''], ['120.0', ''], ['244.9', 'text-[#3565e8]'],
  ['238.7', 'text-[#d63849]'], ['280.0', ''], ['220.0', ''], ['371.5', 'text-[#3565e8]'], ['359.8', 'text-[#d63849]'],
  ['380.0', ''], ['320.0', ''], ['57.5', ''],
];
const OSC_VALUES_FRONT: [string, string][] = [
  ['175.81', 'text-[#3565e8]'], ['148.41', 'text-[#d63849]'], ['180.00', ''], ['120.00', ''], ['288.02', 'text-[#3565e8]'],
  ['286.06', 'text-[#d63849]'], ['280.00', ''], ['220.00', ''], ['386.98', 'text-[#3565e8]'], ['374.02', 'text-[#d63849]'],
  ['380.00', ''], ['320.00', ''], ['59.74', ''],
];

function OscLegend({ name, values }: { name: string; values: [string, string][] }) {
  return (
    <div className="flex gap-[3px] whitespace-nowrap text-[7px] leading-[10px] text-[#868993]">
      <span><b className="font-medium text-[#c5c8d0]">{name}</b> 20 12 12 10 6 6 5 3 3 14 close</span>
      <span className="flex gap-[3px] pl-[2px] text-[6px]">
        {values.map(([v, c]) => <span key={v} className={c ? `font-medium ${c}` : 'font-bold text-[#eceef3]'}>{v}</span>)}
        {[0, 1, 2, 3, 4].map(i => <span key={i} className="pr-px text-[#c5c8d0]">Ø</span>)}
      </span>
    </div>
  );
}

const RANGES = ['1일', '5날', '1달', '3달', '6달', 'YTD', '1해', '5해', '전체'];
const PANELS = ['Pine 에디터', '전략테스터', '리플레이 트레이딩 패널', '트레이딩패널'];

function RangeBar({ children }: { children?: ReactNode }) {
  return (
    <div className="flex h-[21px] shrink-0 items-center border-b-2 border-[#2a2e39] pl-[8px] text-[7px] font-medium text-[#c5c8d0]">
      <div className="flex items-center gap-[7px]">
        {RANGES.map(r => <button key={r}>{r}</button>)}
        <span className="h-[10px] w-px bg-[#363a45]" />
        <button aria-label="날짜로 가기"><CalendarSync size={11} strokeWidth={1.500} /></button>
      </div>
      {children}
    </div>
  );
}

function PanelTabs({ children }: { children?: ReactNode }) {
  return (
    <div className="flex h-5 shrink-0 items-center gap-[18px] pl-[9px] text-[7px] font-medium text-[#c5c8d0]">
      <button className="flex items-center gap-[6px]">스탁 스크리너 <ChevronDown size={6} /></button>
      {PANELS.map(p => <button key={p}>{p}</button>)}
      {children}
    </div>
  );
}

/* ---------- watchlist ---------- */

interface Quote {
  symbol: string;
  price: string;
  tail?: string;
  change: string;
  pct: string;
  up?: boolean;
  flag?: boolean;
  active?: boolean;
  note?: string;
  main: string;
  small?: string;
}

const CRYPTO: Quote[] = [
  { symbol: 'BTCUSDT.P', price: '', tail: '93,599.9', change: '−1,414.2', pct: '−1.49%', flag: true, main: '#f7931a', small: '#26a69a' },
  { symbol: 'BTC.D', price: '', tail: '57.85', change: '−0.04', pct: '−0.07%', flag: true, main: '#f7931a' },
  { symbol: 'TOTAL2', price: '', tail: '1.35 T', change: '−18.76 B', pct: '−1.37%', flag: true, main: '#2f6bff' },
  { symbol: 'SOLUSDT.P', price: '191.', tail: '50', change: '−5.87', pct: '−2.97%', active: true, main: '#15202e', small: '#35c7a8' },
];
const US: Quote[] = [
  { symbol: 'NQ1!', price: '', tail: '21,309.00', change: '−51.75', pct: '−0.24%', note: '지', main: '#1290b5' },
  { symbol: 'USDTKRW', price: '1,', tail: '500.0', change: '2.0', pct: '0.13%', up: true, main: '#26a69a', small: '#f0f3fa' },
];
const FUTURES: Quote[] = [
  { symbol: 'SUIUSDT.P', price: '4.618', tail: '6', change: '−0.2743', pct: '−5.61%', main: '#e6eefc', small: '#26a69a' },
];

function CoinIcon({ main, small }: { main: string; small?: string }) {
  return (
    <svg viewBox="0 0 20 20" className="size-[9px]">
      {small && <circle cx="14" cy="6" r="5.500" fill={small} />}
      <circle cx={small ? 7 : 10} cy={small ? 13 : 10} r={small ? 6.500 : 9.500} fill={main} />
      <path d={small ? 'M5 11h4M5 14h4' : 'M7 7h5M7 10h6M7 13h5'} stroke={main === '#e6eefc' ? '#6fa8ef' : '#fff'} strokeWidth="1.500" opacity="0.8" />
      {main === '#15202e' && <path d="M4 11h7M3 14h7" stroke="#8a5cf6" strokeWidth="2" />}
    </svg>
  );
}

function QuoteRow({ q }: { q: Quote }) {
  const tone = q.up ? 'text-[#22a085]' : 'text-[#d63849]';
  const tail = q.price || q.symbol === 'TOTAL2' ? 'text-[#22a085]' : tone;
  return (
    <tr className={q.active ? 'rounded-[2px] font-medium outline outline-1 -outline-offset-1 outline-[#c9ccd4]' : 'border-b border-[#21252f] font-medium'}>
      <td className="relative h-4 text-[#dfe1e7]">
        <span className="flex items-center gap-[3px] pl-[8px]">
          {q.flag && <svg viewBox="0 0 7 7" className="absolute left-0 h-[7px] w-[6px]"><path d="M0 0h7L5 3.500 7 7H0z" fill="#f7525f" /></svg>}
          <CoinIcon main={q.main} small={q.small} />
          {q.symbol}
          {q.note && <sup className="text-[5px] text-[#f59f12]">{q.note}</sup>}
        </span>
      </td>
      <td className={`text-right ${tail}`}><span className="font-bold text-[#eceef3]">{q.price}</span>{q.tail}</td>
      <td className={`text-right ${tone}`}>{q.change}</td>
      <td className={`pr-2 text-right ${tone}`}>{q.pct}</td>
    </tr>
  );
}

function GroupRow({ name }: { name: string }) {
  return (
    <tr className="border-b border-[#21252f]">
      <td colSpan={4} className="h-[18px] text-[6px] text-[#868993]">
        <button className="flex items-center gap-[6px] pl-[10px] pt-1"><ChevronDown size={6} />{name}</button>
      </td>
    </tr>
  );
}

function Cols() {
  return <colgroup><col className="w-[79px]" /><col className="w-[50px]" /><col className="w-[59px]" /><col /></colgroup>;
}

function Watchlist() {
  return (
    <section>
      <header className="flex h-[22px] items-center pl-[9px] pr-2 text-[#dfe1e7]">
        <button className="flex items-center gap-[3px] text-[7px] font-bold">왓치리스트 <ChevronDown size={6} /></button>
        <div className="ml-auto flex items-center gap-[9px] text-[#b2b5be]">
          <button aria-label="심볼 추가"><Plus size={11} strokeWidth={1.500} /></button>
          <button aria-label="고급 뷰"><PieChart size={11} strokeWidth={1.500} /></button>
          <button aria-label="설정"><Ellipsis size={11} /></button>
        </div>
      </header>
      <table className="w-full table-fixed border-collapse text-[7px] leading-[10px]">
        <Cols />
        <thead>
          <tr className="border-b border-[#2a2e39] text-[#868993]">
            <th className="relative h-[17px] pl-[9px] text-left font-normal"><span className="absolute left-0 top-[5px] h-[7px] w-[5px] bg-[#4a4d57]" />심볼</th>
            <th className="text-right font-normal">현재가</th>
            <th className="text-right font-normal">체인지</th>
            <th className="pr-2 text-right font-normal">변동%</th>
          </tr>
        </thead>
        <tbody>
          <tr><td colSpan={4} className="h-5 text-[6px] text-[#868993]"><button className="flex items-center gap-[6px] pl-[10px] pt-2"><ChevronDown size={6} />가상화폐</button></td></tr>
          {CRYPTO.map(q => <QuoteRow key={q.symbol} q={q} />)}
          <GroupRow name="미국" />
          {US.map(q => <QuoteRow key={q.symbol} q={q} />)}
          <GroupRow name="국내주식" />
          <GroupRow name="해외선물" />
          {FUTURES.map(q => <QuoteRow key={q.symbol} q={q} />)}
        </tbody>
      </table>
    </section>
  );
}

const PERFORMANCE = [
  { value: '−1.48%', label: '1W', cls: 'bg-[#331f2a] text-[#e23b4b]' },
  { value: '−11.69%', label: '1M', cls: 'bg-[#5c2730] text-[#e23b4b]' },
  { value: '37.69%', label: '3M', cls: 'bg-[#164643] text-[#0f9d82]' },
  { value: '37.28%', label: '6M', cls: 'bg-[#164643] text-[#0f9d82]' },
  { value: '1.12%', label: 'YTD', cls: 'bg-[#162730] text-[#0f9d82]' },
  { value: '92.60%', label: '1Y', cls: 'bg-[#164643] text-[#0f9d82]' },
];

function Details() {
  return (
    <section className="flex flex-1 flex-col border-t-2 border-[#2a2e39] pl-[9px] pr-2 text-[7px] leading-[10px] text-[#c5c8d0]">
      <header className="flex h-[25px] items-center gap-1">
        <CoinIcon main="#15202e" small="#35c7a8" />
        <h2 className="text-[8px] font-bold text-[#eceef3]">SOLUSDT.P</h2>
        <div className="ml-auto flex gap-[9px]">
          <button aria-label="레이아웃"><LayoutGrid size={11} strokeWidth={1.500} /></button>
          <button aria-label="편집"><SquarePen size={11} strokeWidth={1.500} /></button>
          <button aria-label="더보기"><Ellipsis size={11} /></button>
        </div>
      </header>
      <p className="flex items-center gap-[3px] text-[6px] font-medium">SOL / TetherUS PERPETUAL CONTRACT <ExternalLink size={7} /> · BINANCE</p>
      <p className="text-[6px] text-[#868993]">스왑 · 크립토</p>
      <p className="mt-[9px] flex h-4 items-baseline gap-[3px] leading-4">
        <span className="text-[15px] font-medium text-[#f0f3fa]">191.<span className="text-[#22a085]">50</span></span>
        <span className="text-[6px] font-medium">USDT</span>
        <span className="pl-[2px] text-[8px] font-medium text-[#f7525f]">−5.87&nbsp; −2.97%</span>
      </p>
      <p className="flex items-center gap-[3px] pl-[3px] text-[#22a085]"><span className="size-1 rounded-full bg-[#22a085]" />마켓 오픈</p>
      <a href="#news" className="mt-[7px] flex h-[13px] items-center rounded-sm bg-[#2d2650] px-[5px] text-[6px] font-medium text-[#dfe1e7]">
        <Zap size={6} fill="#9575cd" className="mr-1 text-[#9575cd]" />1시간 전 · "솔라나, 美 ETF-신규 투자자 유입으로 상승 기대"
        <ChevronRight size={7} className="ml-auto" />
      </a>
      <h3 className="mt-[11px] font-bold">주요 통계</h3>
      <dl className="mt-1 grid grid-cols-2 gap-y-[3px] font-medium">
        <dt>거래량</dt><dd className="text-right">6.00 M</dd>
        <dt>평균 볼륨(30)</dt><dd className="text-right">14.56 M</dd>
      </dl>
      <h3 className="mt-[13px] font-bold">성과</h3>
      <div className="mt-1 grid grid-cols-3 gap-1 text-center text-[6px]">
        {PERFORMANCE.map(p => (
          <div key={p.label} className={`flex h-[21px] flex-col justify-center rounded-[1px] ${p.cls}`}>
            <span className="text-[7px] font-medium leading-[10px]">{p.value}</span>
            <span className="leading-[8px] text-[#c5c8d0]">{p.label}</span>
          </div>
        ))}
      </div>
      <h3 className="mt-[10px] font-bold">시즌별</h3>
      <svg viewBox="180 788 702 220" className="mt-[3px] w-full" aria-label="시즌별">
        <path d="M286 790V1005M454 790V1005M622 790V1005M787 790V1005" stroke="#4a4d57" strokeWidth="3" strokeDasharray="9 9" />
        <path d="M180 997H880" stroke="#868993" strokeWidth="3" />
        <polyline points="190,995 280,997 310,978 330,985 350,980 380,992 450,988 470,985 500,990 560,985 600,990 690,990 720,980 745,980 770,973 790,975 820,983 840,983" fill="none" stroke="#8c1c4f" strokeWidth="3" />
        <polyline points="190,992 200,972 220,970 240,973 265,968 280,975 295,973 310,980 350,978 370,968 385,975 440,976 460,982 490,988 520,978 535,968 560,972 600,973 620,980 650,980 690,975 705,972 715,962 728,945 734,950 740,938 745,940 755,903 762,917 768,910 775,920 790,905 795,908 801,885 808,890 812,886 820,888 823,850 829,805 835,832 840,835" fill="none" stroke="#9416c9" strokeWidth="3" />
        <circle cx="190" cy="995" r="8" fill="#2962ff" />
      </svg>
      <div className="mt-1 flex justify-between pr-[62px] text-[6px] font-medium"><span>1월</span><span>4월</span><span>7월</span><span>10월</span></div>
      <div className="mt-[6px] flex justify-center gap-2 text-[6px]">
        <span className="flex items-center gap-[2px]"><i className="size-1 bg-[#2962ff]" />2025</span>
        <span className="flex items-center gap-[2px]"><i className="size-1 bg-[#ad1457]" />2024</span>
        <span className="flex items-center gap-[2px]"><i className="size-1 bg-[#9416c9]" />2023</span>
      </div>
    </section>
  );
}

/* ---------- toolbars ---------- */

function Glyph({ children }: { children: ReactNode }) {
  return <svg viewBox="0 0 28 28" className="size-[14px]" fill="none" stroke="currentColor" strokeWidth="1.800">{children}</svg>;
}

const TrendGlyph = () => <Glyph><path d="M7 21 21 7" /><circle cx="5.500" cy="22.500" r="2" /><circle cx="22.500" cy="5.500" r="2" /></Glyph>;
const HLineGlyph = () => <Glyph><path d="M3 14h8M17 14h8" /><circle cx="14" cy="14" r="2.500" /></Glyph>;
const FibGlyph = () => <Glyph><path d="M3 5h22M3 11h19M6 17h19M6 23h19" /><circle cx="24" cy="11" r="2" /><circle cx="4" cy="23" r="2" /></Glyph>;
const PitchGlyph = () => <Glyph><path d="M5 20V12l17-6M9 15h16M9 19h16M5 24h20" /><circle cx="5" cy="22" r="2" /><circle cx="5" cy="11" r="2" /></Glyph>;
const WaveGlyph = () => <Glyph><path d="m3 22 6-8 5 6 5-10 5 6" /><circle cx="3" cy="23" r="1.500" /><circle cx="9" cy="13" r="1.500" /><circle cx="14" cy="21" r="1.500" /><circle cx="25" cy="17" r="1.500" /><path d="M10 4v5M21 3v4" /></Glyph>;
const WaveAltGlyph = () => <Glyph><path d="m3 22 6-8 5 6 5-10 5 6" /><circle cx="3" cy="23" r="1.500" /><circle cx="14" cy="21" r="1.500" /><circle cx="25" cy="17" r="1.500" /><path d="m7 9 2-5 2 5M23 4h-3v4h3" /></Glyph>;
const LongGlyph = () => <Glyph><path d="M3 5h22M7 14h18M7 23h14" /><path d="M5 7v14" strokeDasharray="2 2" /><circle cx="5" cy="14" r="2" /><circle cx="5" cy="23" r="2" /><circle cx="23" cy="23" r="2" /></Glyph>;
const ShortGlyph = () => <Glyph><path d="M7 5h18M7 12h18M3 23h22M7 17h14" /><circle cx="5" cy="5" r="2" /><circle cx="5" cy="12" r="2" /><circle cx="23" cy="17" r="2" /></Glyph>;
const RectGlyph = () => <Glyph><path d="M8 6h12M8 22h12M6 8v12M22 8v12" /><circle cx="6" cy="6" r="2" /><circle cx="22" cy="6" r="2" /><circle cx="6" cy="22" r="2" /><circle cx="22" cy="22" r="2" /></Glyph>;
const TextGlyph = () => <Glyph><path d="M5 8V5h18v3M14 5v18M11 23h6" /></Glyph>;
const AnchorTextGlyph = () => <Glyph><path d="M3 8V5h15v3M10 5v17M8 22h5M22 13v10M18 20c1 3 7 3 8 0" /><circle cx="22" cy="12" r="1.500" /></Glyph>;
const ChannelGlyph = () => <Glyph><path d="m4 18 13-13M11 23 24 10" /><circle cx="4" cy="19" r="2" /><circle cx="18" cy="5" r="2" /><circle cx="10" cy="24" r="2" /></Glyph>;
const PatternGlyph = () => <Glyph><path d="M5 22V7l8 8 9-9v16l-9-7-8 7" /><circle cx="5" cy="23" r="2" /><circle cx="5" cy="6" r="2" /><circle cx="13" cy="15" r="2" /><circle cx="22" cy="6" r="2" /><circle cx="22" cy="23" r="2" /></Glyph>;
const MagnetGlyph = () => <Glyph><path d="M5 24V13a9 9 0 0 1 18 0v11h-5V13a4 4 0 0 0-8 0v11zM5 20h5M18 20h5" /></Glyph>;
const BrushGlyph = () => <Glyph><path d="M4 22c3 3 9 3 11-2 1-3-2-6-5-5-4 1-2 5-6 7zM14 16 25 5M17 19 26 8" /></Glyph>;
const CrossGlyph = () => <Glyph><path d="M14 3v8M14 17v8M3 14h8M17 14h8" /></Glyph>;
const CandleGlyph = () => <Glyph><path d="M9 4v4M9 20v4M6 8h6v12H6zM19 7v4M19 18v4M16 11h6v7h-6z" /></Glyph>;
const IndicatorGlyph = () => <Glyph><path d="M4 13 11 7l4 3 9-7M5 24v-6h4v6M12 24v-9h4v9M19 24V11h4v13M3 24h22" /></Glyph>;
const HexGlyph = () => <Glyph><path d="m2 14 6-10.500h12L26 14l-6 10.500H8z" /><circle cx="14" cy="14" r="4" /></Glyph>;
const DrawLockGlyph = () => <Glyph><path d="m4 20 13-14 4 4L8 23H4zM16 19h9v6h-9zM18 19v-2a2 2 0 0 1 5 0" /></Glyph>;
const EyeDrawGlyph = () => <Glyph><path d="M3 12c5-9 17-9 22 0-5 9-17 9-22 0zM16 25l7-6" /><circle cx="14" cy="12" r="3.500" /></Glyph>;
const QuickGlyph = () => <Glyph><path d="M13 4a10 10 0 1 0 10 10M20 21l5 5M17 3l-4 9h5l-2 8 8-11h-5l2-6z" /></Glyph>;
const DomGlyph = () => <Glyph><path d="M5 3v22M5 14h9l10-9M5 20h9l5-6" /></Glyph>;

const INTERVALS = ['1분', '5분', '15분', '30분', '1시간', '4시간', '날', '주'];
const DRAW_TOOLS: [string, () => ReactNode][] = [
  ['추세줄', TrendGlyph], ['가로줄', HLineGlyph], ['피보나치', FibGlyph], ['피치포크', PitchGlyph], ['엘리엇 임펄스', WaveGlyph],
  ['엘리엇 코렉션', WaveAltGlyph], ['롱 포지션', LongGlyph], ['쇼트 포지션', ShortGlyph], ['네모', RectGlyph], ['텍스트', TextGlyph],
  ['앵커드 텍스트', AnchorTextGlyph], ['패러렐 채널', ChannelGlyph],
];
const Divider = () => <span className="h-[10px] w-px bg-[#363a45]" />;

function TopToolbar() {
  return (
    <div className="flex h-[23px] shrink-0 items-center border-b-2 border-[#2a2e39] bg-[#131722] pl-[6px] text-[7px] font-medium text-[#c5c8d0]">
      <button className="mr-[12px] size-[15px] rounded-full bg-[#a1826b] text-[9px] font-bold leading-[15px] text-white">M</button>
      <button className="flex items-center gap-px font-bold text-[#eceef3]"><Search size={9} />SOLUSDT.</button>
      <button aria-label="심볼 비교" className="ml-[6px] mr-[7px]"><CirclePlus size={12} strokeWidth={1.500} /></button>
      <Divider />
      <div className="flex gap-[7px] px-[5px]">
        {INTERVALS.map((t, i) => <button key={t} className={i === 0 ? 'text-[#2962ff]' : ''}>{t}</button>)}
        <button aria-label="인터벌 더보기"><ChevronDown size={7} /></button>
      </div>
      <Divider />
      <button aria-label="캔들" className="mx-[3px]"><CandleGlyph /></button>
      <Divider />
      <button className="ml-[5px] flex items-center gap-[2px]"><IndicatorGlyph />지표</button>
      <button aria-label="즐겨찾기" className="mx-[8px]"><ChevronDown size={7} /></button>
      <button aria-label="지표 템플릿" className="mr-[7px]"><LayoutGrid size={11} strokeWidth={1.500} /></button>
      <Divider />
      <button className="mx-[6px] flex items-center gap-[3px]"><AlarmClockPlus size={11} strokeWidth={1.500} />얼러트</button>
      <button className="mx-[7px] flex items-center gap-[3px]"><Rewind size={10} strokeWidth={1.500} />리플레이</button>
      <Divider />
      <button aria-label="되돌리기" className="mx-[6px]"><Undo size={9} strokeWidth={1.500} /></button>
      <button aria-label="다시하기" className="mx-1 text-[#4a4d57]"><Redo size={9} strokeWidth={1.500} /></button>
      <div className="ml-auto flex h-full items-center gap-[6px] bg-[#1c202b] pl-[4px] pr-1">
        <span className="grid grid-cols-2 gap-[2px]">{[0, 1, 2, 3, 4, 5].map(i => <i key={i} className="size-px bg-[#6a6d78]" />)}</span>
        {DRAW_TOOLS.map(([label, Icon]) => <button key={label} aria-label={label}><Icon /></button>)}
      </div>
      <span className="h-[9px] w-[3px] border-y border-r border-[#868993]" />
      <button className="ml-[8px] mr-[7px] whitespace-nowrap text-[#eceef3]">세팅완</button>
      <button aria-label="레이아웃 관리" className="mr-[5px]"><ChevronDown size={7} /></button>
      <Divider />
      <div className="flex items-center gap-[7px] px-[5px]">
        <button aria-label="빠른 찾기"><QuickGlyph /></button>
        <button aria-label="설정"><HexGlyph /></button>
        <button aria-label="풀스크린"><Maximize size={11} strokeWidth={1.500} /></button>
        <button aria-label="스냅샷"><Camera size={12} strokeWidth={1.500} /></button>
      </div>
      <button className="h-[15px] w-[44px] shrink-0 rounded-full bg-white text-[7px] text-[#131722]">퍼블리쉬</button>
    </div>
  );
}

function ToolButton({ label, on, children }: { label: string; on?: boolean; children: ReactNode }) {
  return (
    <button aria-label={label} className="flex h-[18px] w-full items-center justify-center">
      <span className={`flex size-[15px] items-center justify-center rounded-[2px] ${on ? 'bg-[#2962ff] text-white' : ''}`}>{children}</span>
    </button>
  );
}

function LeftRail() {
  return (
    <nav className="flex w-[29px] shrink-0 flex-col items-center border-r-2 border-[#2a2e39] pt-[3px] text-[#b2b5be]">
      <div className="flex h-[148px] w-full flex-col justify-between">
        <ToolButton label="커서"><span className="text-[#2962ff]"><CrossGlyph /></span></ToolButton>
        <ToolButton label="추세줄"><TrendGlyph /></ToolButton>
        <ToolButton label="피보나치"><FibGlyph /></ToolButton>
        <ToolButton label="패턴"><PatternGlyph /></ToolButton>
        <ToolButton label="예측"><LongGlyph /></ToolButton>
        <ToolButton label="브러쉬"><BrushGlyph /></ToolButton>
        <ToolButton label="글"><TextGlyph /></ToolButton>
        <ToolButton label="아이콘"><Smile size={12} strokeWidth={1.500} /></ToolButton>
      </div>
      <span className="my-[3px] h-px w-[18px] bg-[#363a45]" />
      <ToolButton label="자"><Ruler size={12} strokeWidth={1.500} /></ToolButton>
      <ToolButton label="줌"><ZoomIn size={12} strokeWidth={1.500} /></ToolButton>
      <span className="my-[3px] h-px w-[18px] bg-[#363a45]" />
      <div className="flex h-[93px] w-full flex-col justify-between">
        <ToolButton label="마그넷" on><MagnetGlyph /></ToolButton>
        <ToolButton label="그리기 유지"><DrawLockGlyph /></ToolButton>
        <ToolButton label="잠금"><LockOpen size={12} strokeWidth={1.500} /></ToolButton>
        <ToolButton label="감추기"><EyeDrawGlyph /></ToolButton>
        <ToolButton label="싱크" on><Link size={11} strokeWidth={1.500} /></ToolButton>
      </div>
      <span className="my-[3px] h-px w-[18px] bg-[#363a45]" />
      <ToolButton label="지우기"><Trash2 size={12} strokeWidth={1.500} /></ToolButton>
      <div className="mb-[8px] mt-auto w-full"><ToolButton label="즐겨찾기" on><Star size={11} strokeWidth={1.500} /></ToolButton></div>
    </nav>
  );
}

function RightRail() {
  return (
    <nav className="flex w-6 shrink-0 flex-col items-center justify-between border-l-2 border-[#21252f] text-[#b2b5be]">
      <div className="flex flex-col items-center gap-[9px] pt-1">
        <button aria-label="왓치리스트" className="rounded-[2px] bg-[#142a63] p-[2px] text-[#3f74ff]"><TextAlignJustify size={12} strokeWidth={1.500} /></button>
        <button aria-label="얼러트"><AlarmClock size={14} strokeWidth={1.500} /></button>
        <button aria-label="뉴스"><ListPlus size={14} strokeWidth={1.500} /></button>
        <button aria-label="데이터 윈도우"><Layers size={14} strokeWidth={1.500} /></button>
        <button aria-label="챗" className="relative">
          <MessagesSquare size={14} strokeWidth={1.500} />
          <span className="absolute -right-px -top-1 size-[7px] rounded-full bg-[#f23645] text-[5px] font-bold leading-[7px] text-white">1</span>
        </button>
        <button aria-label="알림"><Bell size={14} strokeWidth={1.500} /></button>
      </div>
      <div className="flex flex-col items-center gap-[10px] pb-[4px]">
        <button aria-label="호가창"><DomGlyph /></button>
        <button aria-label="스크리너"><Target size={14} strokeWidth={1.500} /></button>
        <button aria-label="캘린더"><Calendar size={14} strokeWidth={1.500} /></button>
        <button aria-label="커뮤니티"><Users size={14} strokeWidth={1.500} /></button>
        <button aria-label="공지"><Bell size={14} strokeWidth={1.500} /></button>
        <button aria-label="도움"><CircleHelp size={14} strokeWidth={1.500} /></button>
      </div>
    </nav>
  );
}

function ChartLegend() {
  const ohlc = [['시', '191.42'], ['고', '191.50'], ['저', '191.42'], ['종', '191.50']];
  return (
    <div className="absolute left-[5px] right-8 top-0 whitespace-nowrap text-[7px] text-[#868993]">
      <div className="flex h-4 items-center">
        <CoinIcon main="#15202e" small="#35c7a8" />
        <h1 className="ml-px text-[8px] text-[#eceef3]">SOL / TetherUS PERPETUAL CONTRACT · 1 · BINANCE</h1>
        <span className="mx-[8px] size-[5px] rounded-full bg-[#089981] ring-2 ring-[#089981]/30" />
        <p className="flex gap-[2px] text-[#22a085]">
          {ohlc.map(([k, v]) => <span key={k}><b className="font-medium text-[#dfe1e7]">{k}</b>{v}</span>)}
          <span>+0.08 (+0.04%)</span>
          <span><b className="font-medium text-[#dfe1e7]">볼륨</b>1.02 K</span>
        </p>
        <div className="ml-auto flex gap-[3px]">
          <button aria-label="아래로" className="rounded-[2px] border border-[#2a2e39] p-[2px]"><ArrowDown size={7} /></button>
          <button aria-label="맥시마이즈" className="rounded-[2px] border border-[#2a2e39] p-[2px]"><Maximize size={7} /></button>
        </div>
      </div>
      <div className="flex h-[18px] items-center gap-[4px] text-center text-[7px] leading-[7px]">
        <button className="h-[17px] w-8 rounded-[2px] border border-[#a32a38] font-medium text-[#f23645]">191.49<br /><span className="text-[6px]">셀</span></button>
        <span className="text-[5px] text-[#dfe1e7]">0.01</span>
        <button className="ml-[2px] h-[17px] w-8 rounded-[2px] border border-[#2247a8] font-medium text-[#2962ff]">191.50<br /><span className="text-[6px]">바이</span></button>
      </div>
      <div className="flex flex-col pt-px leading-[13px]">
        <p className="flex items-center gap-[8px] text-[#50535e]">
          Cuong_... 5 10 30 50 1.01 1.13 1.618 0.76 0.886 1.01 1.618 2.618 0.85 0.999 1.28 2 3.618 1.1 1.24 1.424 1.618 2.618 1.24 1.41 2.01 2.24 3.618 1.55 1.82 2.01 2.24 3.618 1.55 1.902 1.13 1.618 2.24 0.87 1.13 0.89 0.77 0.88...
          <EyeOff size={8} className="text-[#b2b5be]" />
        </p>
        <p><b className="font-medium text-[#c5c8d0]">BB</b> 20 SMA close 2 &nbsp;<span className="font-medium text-[#ff9800]">191.01</span> <span className="font-medium text-[#d63849]">191.69</span> <span className="font-medium text-[#3565e8]">190.33</span></p>
        <p><b className="font-medium text-[#c5c8d0]">볼륨 · SOL</b> &nbsp;<span className="font-medium text-[#22a085]">1.02 K</span></p>
        <p><b className="font-medium text-[#c5c8d0]">이평선/BPR/FVG 지표</b> 5 20 60 120 240 200 12 24 50 100 200 1 W 6 M</p>
      </div>
      <button aria-label="지표 범례 감추기" className="flex h-[11px] w-4 items-center justify-center rounded-[2px] border border-[#2a2e39]"><ChevronUp size={7} /></button>
    </div>
  );
}

/* ---------- browser chrome ---------- */

function TvMark() {
  return (
    <svg viewBox="0 0 16 16" className="size-[8px] shrink-0">
      <rect width="16" height="16" rx="3" fill="#131722" />
      <path d="M2.500 5h5v6H5V7.500H2.500zM11 5h3l-2.500 6h-3z" fill="#fff" />
      <circle cx="9.300" cy="6.200" r="1.200" fill="#fff" />
    </svg>
  );
}

function SiteIcon({ bg, children }: { bg: string; children?: ReactNode }) {
  return (
    <svg viewBox="0 0 16 16" className="size-[8px] shrink-0" fill="none" stroke="#fff" strokeWidth="2.200">
      <rect width="16" height="16" rx="2" fill={bg} stroke="none" />
      {children}
    </svg>
  );
}

const BOOKMARKS: { name: string; icon: ReactNode; cut?: boolean }[] = [
  { name: 'NAVER', icon: <SiteIcon bg="#03c75a"><path d="M5 12V4l6 8V4" /></SiteIcon> },
  { name: '네이버 광고', icon: <SiteIcon bg="#2db400"><path d="M5 12V4l6 8V4" /></SiteIcon> },
  { name: 'YouTube', icon: <svg viewBox="0 0 16 16" className="size-[9px]"><rect y="2" width="16" height="12" rx="3" fill="#f00033" /><path d="m6.500 5.500 4 2.500-4 2.500z" fill="#fff" /></svg> },
  { name: '쿠팡플레이 - 와우...', cut: true, icon: <svg viewBox="0 0 16 16" className="size-[8px]"><path d="M1 1l14 7-14 7z" fill="#3b8ef3" /><path d="M1 1l7 7-5 3z" fill="#e8467c" /></svg> },
  { name: '넷플릭스', icon: <svg viewBox="0 0 16 16" className="size-[8px]"><path d="M3 0h3l4 9V0h3v16h-3L6 7v9H3z" fill="#d81f26" /></svg> },
  { name: '율플레 블로그 : 네...', cut: true, icon: <svg viewBox="0 0 16 16" className="size-[8px]"><path d="M1 2h14v10H9l-1 3-1-3H1z" fill="#19ba48" /><path d="M4 7h8" stroke="#fff" strokeWidth="2" /></svg> },
  { name: '미투디스크', icon: <SiteIcon bg="#2b5797"><path d="M4 5h4M4 8h8M4 11h5" stroke="#ffd54f" /></SiteIcon> },
  { name: '트레이딩뷰', icon: <TvMark /> },
  { name: '투딩 | 올바른 암호...', cut: true, icon: <svg viewBox="0 0 16 16" className="size-[8px]" fill="none" stroke="#1f4fd8" strokeWidth="3"><path d="M2 3h6a5 5 0 0 1 0 10H7V7" /></svg> },
  { name: 'Bitget Exchange: Cr...', cut: true, icon: <SiteIcon bg="#00e5e8"><path d="m8 2-4 4 4 3M8 14l4-4-4-3" stroke="#0b2b33" /></SiteIcon> },
  { name: 'Deepcoin | Cryptoc...', cut: true, icon: <SiteIcon bg="#f57c1f"><path d="M8 2v12M2 8h12" /></SiteIcon> },
  { name: '빙엑스', icon: <svg viewBox="0 0 16 16" className="size-[8px]" fill="none" stroke="#2354e6" strokeWidth="3.500"><path d="M1 3c6 0 8 10 14 10M1 13c6 0 8-10 14-10" /></svg> },
  { name: 'Binance - Cryptocu...', cut: true, icon: <svg viewBox="0 0 16 16" className="size-[8px]" fill="none" stroke="#f0b90b" strokeWidth="1.800"><path d="m8 1 3 3M8 1 5 4M8 15l3-3M8 15l-3-3M1 8l3-3M1 8l3 3M15 8l-3-3M15 8l-3 3M8 5.500 10.500 8 8 10.500 5.500 8z" /></svg> },
  { name: '컬리님자트', icon: <TvMark /> },
  { name: '블루밍비트 | 전문...', cut: true, icon: <SiteIcon bg="#35e09a"><path d="M3 6h4v4M9 10V6h4" strokeWidth="1.500" /></SiteIcon> },
  { name: '크롬설정', icon: <svg viewBox="0 0 16 16" className="size-[8px]"><path d="M6 2h4v5l5 8H1l5-8z" fill="#474a50" /></svg> },
];

function BrowserHeader() {
  return (
    <header className="shrink-0 text-[#3c4043]">
      <div className="flex h-[20px] items-center rounded-tl-lg bg-[#dfe3e8] pl-[3px]">
        <button aria-label="탭 검색" className="flex size-[14px] items-center justify-center rounded-[4px] bg-white"><ChevronDown size={7} strokeWidth={3} /></button>
        <div className="ml-[4px] mt-[3px] flex h-[17px] w-[120px] items-center gap-1 rounded-t-[5px] bg-white px-1 text-[6px]">
          <TvMark />
          <span className="whitespace-nowrap text-[#1f2328]">SOLUSDT.P 191.50 ▼ −2.97%</span>
          <button aria-label="탭 닫기" className="ml-auto"><X size={7} strokeWidth={2.500} /></button>
        </div>
        <button aria-label="새 탭" className="ml-[6px]"><Plus size={8} /></button>
        <div className="ml-auto mr-[8px] flex items-center gap-[16px] text-[#6b6f75]">
          <button aria-label="최소화"><Minus size={7} strokeWidth={1.500} /></button>
          <button aria-label="최대화"><Square size={7} strokeWidth={2} /></button>
          <button aria-label="닫기"><X size={8} strokeWidth={1.500} /></button>
        </div>
      </div>
      <div className="flex h-[23px] items-center bg-white pl-[7px]">
        <button aria-label="뒤로"><ArrowLeft size={9} /></button>
        <button aria-label="앞으로" className="ml-[10px] text-[#a5a9ae]"><ArrowRight size={9} /></button>
        <button aria-label="새로고침" className="mx-[10px]"><RotateCw size={9} strokeWidth={2.500} /></button>
        <label className="flex h-[17px] flex-1 items-center gap-[4px] rounded-full bg-[#edf2fa] pl-px pr-2">
          <span className="flex size-[14px] items-center justify-center rounded-full bg-white"><Settings2 size={8} /></span>
          <input aria-label="주소" defaultValue="kr.tradingview.com/chart/djgIZQtp/?symbol=BITMEX%3ABTCUSD.P" className="min-w-0 flex-1 bg-transparent text-[7px] text-[#1f2328] outline-none" />
          <Star size={8} fill="#1a5fd0" className="text-[#1a5fd0]" />
        </label>
        <div className="ml-[9px] mr-[8px] flex items-center gap-[10px]">
          <SiteIcon bg="#e8711c"><path d="M2 6h5v4M9 5l5 6M14 5l-5 6" strokeWidth="1.500" /></SiteIcon>
          <Clock size={9} strokeWidth={4} className="text-[#17495f]" />
          <span className="size-[8px] rounded-full bg-[#b9bbbd]" />
          <button aria-label="확장 프로그램"><Puzzle size={9} strokeWidth={2.500} /></button>
          <span className="-mx-px h-[8px] w-px bg-[#cfd8e6]" />
          <span className="size-[11px] rounded-full bg-linear-to-b from-[#8aa0c8] via-[#5b4a55] to-[#e2c7a8]" />
          <button aria-label="메뉴"><EllipsisVertical size={9} strokeWidth={3} /></button>
        </div>
      </div>
      <nav className="flex h-[18px] items-center gap-[8px] overflow-hidden bg-white pl-[9px] text-[6px] text-[#5f6368]">
        <button aria-label="앱"><LayoutGrid size={9} /></button>
        <span className="-mr-[1px] h-[8px] w-px bg-[#cfd8e6]" />
        {BOOKMARKS.map(b => (
          <a key={b.name} href="#bookmark" className="flex shrink-0 items-center gap-[4px] whitespace-nowrap">
            {b.icon}
            <span className={b.cut ? 'w-[61px]' : ''}>{b.name}</span>
          </a>
        ))}
      </nav>
    </header>
  );
}

/* ---------- windows ---------- */

function BackWindow() {
  return (
    <div className="absolute inset-x-0 -bottom-2 top-0 flex bg-[#161a25]">
      <div className="flex min-w-0 flex-1 flex-col">
        <div className="flex min-h-0 flex-1">
          <div className="relative min-w-0 flex-1 overflow-hidden">
            <BackChart />
            <div className="absolute -left-[16px] top-[486px]"><OscLegend name="슬로우캐스틱" values={OSC_VALUES_BACK} /></div>
          </div>
          <div className="flex w-[60px] shrink-0 flex-col items-end gap-[19px] border-r-2 border-[#2a2e39] pr-[9px] text-[7px] leading-[10px] text-[#b2b5be]">
            <span>95,000.0</span><span>94,800.0</span><span>94,600.0</span>
          </div>
        </div>
        <div className="-ml-[22px] border-t border-[#262a35]"><RangeBar /></div>
        <div className="-ml-[20px]"><PanelTabs /></div>
      </div>
      <aside className="w-[251px] shrink-0 border-r border-[#2a2e39] bg-[#131722] pt-1">
        <table className="w-full table-fixed border-collapse text-[7px] leading-[10px]">
          <Cols />
          <tbody>
            {US.map(q => <QuoteRow key={q.symbol} q={q} />)}
            <GroupRow name="국내주식" />
            <GroupRow name="해외선물" />
          </tbody>
        </table>
      </aside>
      <div className="w-[11px] shrink-0 bg-[#131722]" />
    </div>
  );
}

function FrontWindow() {
  return (
    <div className="absolute -bottom-[3px] -right-[6px] left-[819px] top-16 flex flex-col overflow-hidden rounded-tl-lg bg-[#131722]">
      <BrowserHeader />
      <TopToolbar />
      <div className="flex min-h-0 flex-1">
        <LeftRail />
        <main className="flex min-w-0 flex-1 flex-col">
          <div className="relative flex min-h-0 flex-1 bg-[#161a25]">
            <div className="relative min-w-0 flex-1 overflow-hidden">
              <FrontChart />
              <div className="absolute left-[5px] top-[434px]"><OscLegend name="슬로우캐스틱" values={OSC_VALUES_FRONT} /></div>
            </div>
            <PriceAxis />
            <ChartLegend />
            <button className="absolute right-[2px] top-[2px] flex h-[13px] items-center gap-px rounded-[2px] border border-[#363a45] bg-[#161a25] px-px text-[6px] font-medium text-[#dfe1e7]">USDT<ChevronDown size={5} strokeWidth={3} /></button>
          </div>
          <div className="border-t border-[#262a35]">
            <RangeBar><span className="ml-auto pr-[7px]">21:19:18 (UTC+9)</span></RangeBar>
          </div>
          <PanelTabs>
            <span className="ml-auto flex gap-[9px] pr-[6px]"><ChevronUp size={10} strokeWidth={1.500} /><Maximize size={10} strokeWidth={1.500} /></span>
          </PanelTabs>
        </main>
        <aside className="flex w-[252px] shrink-0 flex-col border-l-2 border-[#2a2e39]">
          <div className="h-[357px] shrink-0"><Watchlist /></div>
          <Details />
        </aside>
        <RightRail />
      </div>
    </div>
  );
}

export default function App() {
  return (
    <div className="relative h-screen min-h-[861px] overflow-hidden bg-[#131722] font-['Noto_Sans_CJK_KR','Noto_Sans',sans-serif]">
      <BackWindow />
      <FrontWindow />
    </div>
  );
}
